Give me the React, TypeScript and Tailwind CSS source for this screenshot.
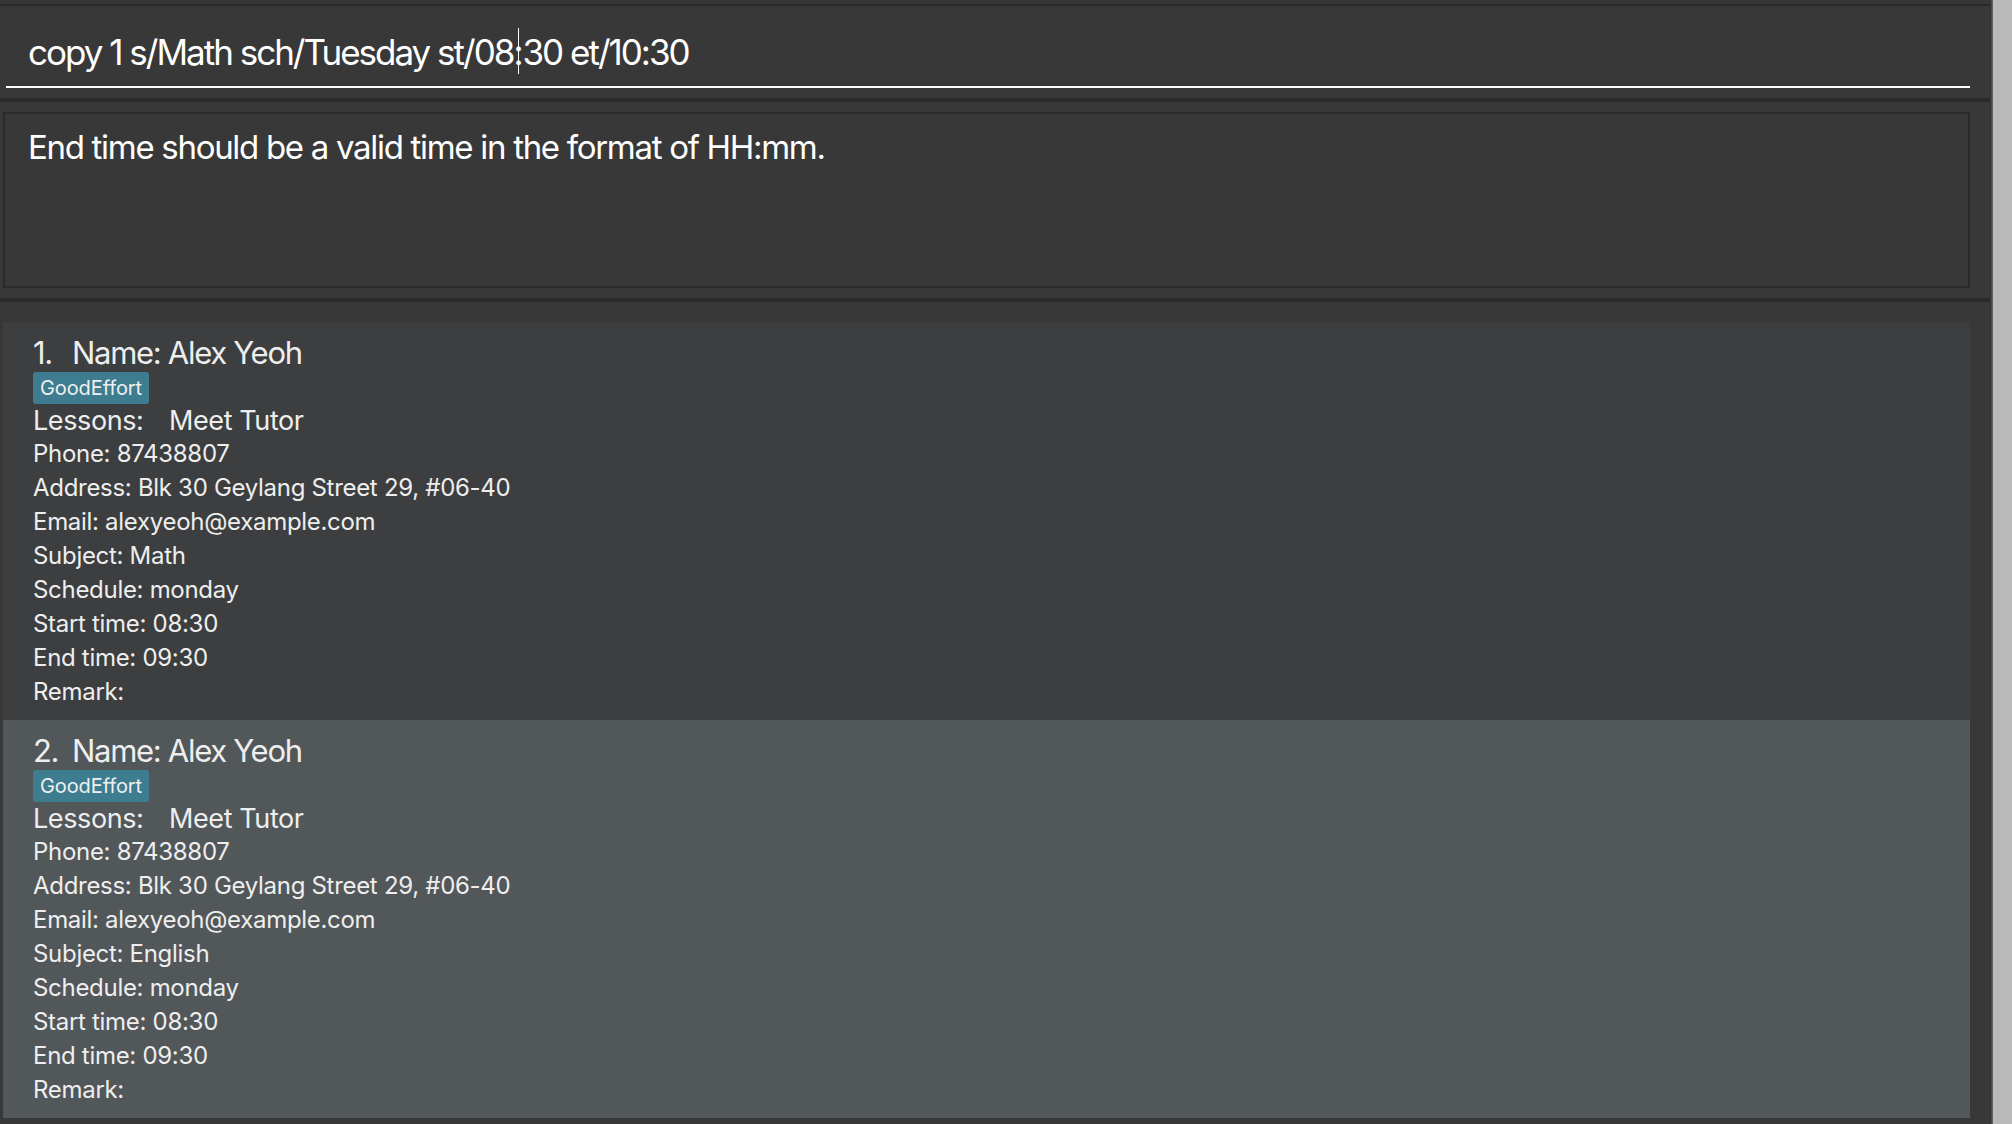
import React from 'react';

type Person = {
    index: number;
    name: string;
    tag: string;
    lesson: string;
    phone: string;
    address: string;
    email: string;
    subject: string;
    schedule: string;
    start: string;
    end: string;
    remark: string;
};

const people: Person[] = [
    {
        index: 1,
        name: 'Alex Yeoh',
        tag: 'GoodEffort',
        lesson: 'Meet Tutor',
        phone: '87438807',
        address: 'Blk 30 Geylang Street 29, #06-40',
        email: 'alexyeoh@example.com',
        subject: 'Math',
        schedule: 'monday',
        start: '08:30',
        end: '09:30',
        remark: '',
    },
    {
        index: 2,
        name: 'Alex Yeoh',
        tag: 'GoodEffort',
        lesson: 'Meet Tutor',
        phone: '87438807',
        address: 'Blk 30 Geylang Street 29, #06-40',
        email: 'alexyeoh@example.com',
        subject: 'English',
        schedule: 'monday',
        start: '08:30',
        end: '09:30',
        remark: '',
    },
];

function PersonCard({ person, odd }: { person: Person; odd: boolean }) {
    const rows = [
        `Phone: ${person.phone}`,
        `Address: ${person.address}`,
        `Email: ${person.email}`,
        `Subject: ${person.subject}`,
        `Schedule: ${person.schedule}`,
        `Start time: ${person.start}`,
        `End time: ${person.end}`,
        `Remark: ${person.remark}`,
    ];

    return (
        <div className={`h-[398px] pl-[30px] pt-[12px] text-[#eeeeee] ${odd ? 'bg-[#3c3e40]' : 'bg-[#52575a]'}`}>
            {/* Name */}
            <div className="flex h-[38px] text-[31px] leading-[38px] tracking-[-1.3px]">
                <span className="w-[39px]">{person.index}.</span>
                <span>Name: {person.name}</span>
            </div>
            {/* Tags */}
            <div className="flex h-[33px]">
                <span className="h-[32px] rounded-[3px] bg-[#3e7c8f] px-[7px] text-[20px] leading-[32px] tracking-[-0.1px] text-[#f0f0f0]">
                    {person.tag}
                </span>
            </div>
            {/* Lessons */}
            <div className="flex h-[32px] text-[27px] leading-[32px] tracking-[-0.4px]">
                <span className="w-[136px]">Lessons:</span>
                <span>{person.lesson}</span>
            </div>
            {rows.map((row) => (
                <div key={row} className="h-[34px] text-[24px] leading-[34px] tracking-[-0.3px]">
                    {row}
                </div>
            ))}
        </div>
    );
}

export default function App() {
    return (
        <div className="flex h-[1124px] w-[2012px] overflow-hidden bg-[#383838]" style={{ fontFamily: 'Inter, "Noto Sans", sans-serif' }}>
            <div className="flex w-[1990px] flex-col">
                {/* Top strip */}
                <div className="h-[4px] bg-[#363636]" />
                <div className="h-[2px] bg-[#2a2a2a]" />

                {/* Command box */}
                <div className="h-[92px] pl-[6px] pt-[24px]">
                    <div className="w-[1964px] border-b-2 border-white">
                        <div className="flex h-[56px] items-start pl-[22px] text-[35px] leading-[44px] tracking-[-2px] text-white">
                            <span>copy 1 s/Math sch/Tuesday st/08:</span>
                            <span className="mt-[-2px] ml-[-3px] mr-[3px] h-[46px] w-[1px] bg-white" />
                            <span>30 et/10:30</span>
                        </div>
                    </div>
                </div>
                <div className="h-[4px] bg-[#2a2a2a]" />

                {/* Result display */}
                <div className="h-[196px] pl-[3px] pt-[10px]">
                    <div className="h-[176px] w-[1967px] border-2 border-[#2a2a2a] pl-[23px] pt-[13px] text-[33px] leading-[40px] tracking-[-1.3px] text-white">
                        End time should be a valid time in the format of HH:mm.
                    </div>
                </div>
                <div className="h-[4px] bg-[#2a2a2a]" />

                {/* Person list */}
                <div className="flex-1 pl-[3px] pt-[20px]">
                    <div className="w-[1967px]">
                        {people.map((p, i) => (
                            <PersonCard key={p.index} person={p} odd={i % 2 === 0} />
                        ))}
                    </div>
                </div>
            </div>

            {/* Window edge */}
            <div className="w-[3px] bg-gradient-to-r from-[#2c2c2c] to-[#6a6a6a]" />
            <div className="flex-1 bg-[#b9b9b9]" />
        </div>
    );
}
